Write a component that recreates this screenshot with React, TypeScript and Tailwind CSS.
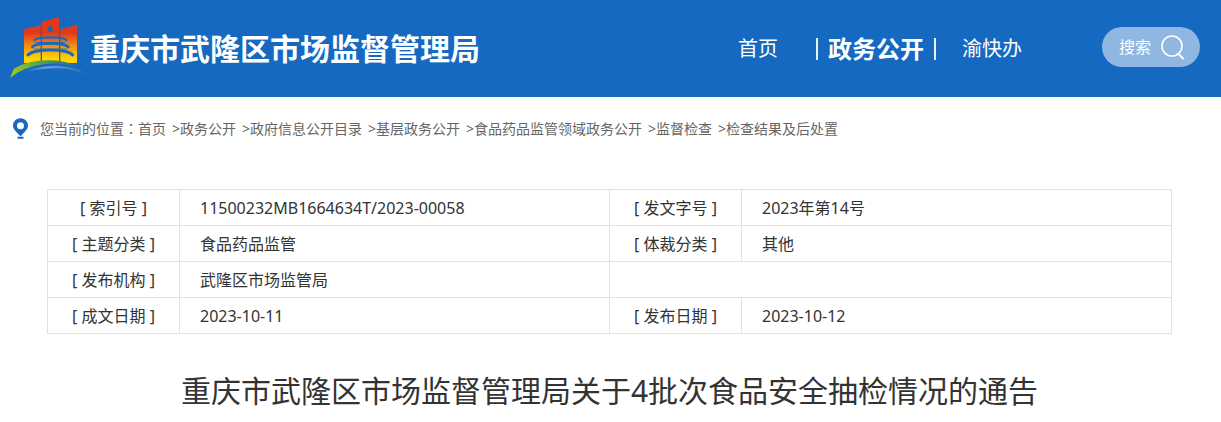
const crumbs = [
  "首页",
  "政务公开",
  "政府信息公开目录",
  "基层政务公开",
  "食品药品监管领域政务公开",
  "监督检查",
  "检查结果及后处置",
];

type Field = { label: string; value: string };

const rows: [Field, Field | null][] = [
  [
    { label: "索引号", value: "11500232MB1664634T/2023-00058" },
    { label: "发文字号", value: "2023年第14号" },
  ],
  [
    { label: "主题分类", value: "食品药品监管" },
    { label: "体裁分类", value: "其他" },
  ],
  [{ label: "发布机构", value: "武隆区市场监管局" }, null],
  [
    { label: "成文日期", value: "2023-10-11" },
    { label: "发布日期", value: "2023-10-12" },
  ],
];

function Logo() {
  return (
    <svg viewBox="30 33 240 186" className="h-[62px] w-20 shrink-0" aria-hidden="true">
      <defs>
        <linearGradient id="tower" x1="0" y1="36" x2="0" y2="174" gradientUnits="userSpaceOnUse">
          <stop offset="0.35" stopColor="#e2391d" />
          <stop offset="0.62" stopColor="#f28a14" />
          <stop offset="0.9" stopColor="#ffd400" />
        </linearGradient>
        <linearGradient id="hill" x1="30" y1="0" x2="225" y2="0" gradientUnits="userSpaceOnUse">
          <stop offset="0" stopColor="#a3cc14" />
          <stop offset="0.5" stopColor="#4fa04a" />
          <stop offset="1" stopColor="#2b6e9c" />
        </linearGradient>
        <linearGradient id="river" x1="75" y1="0" x2="272" y2="0" gradientUnits="userSpaceOnUse">
          <stop offset="0" stopColor="#2f78cc" />
          <stop offset="0.35" stopColor="#6f9fdc" />
          <stop offset="1" stopColor="#315fa5" />
        </linearGradient>
      </defs>
      <g fill="url(#tower)">
        <path d="M72 73 122 61V174H72Z" />
        <path d="M126 50 177 36V174H126Z" />
        <path d="M181 73 231 59V174H181Z" />
      </g>
      <ellipse cx="151" cy="73" rx="7" ry="9" fill="#1569c1" />
      <g fill="none" stroke="#1569c1" strokeLinecap="round">
        <path d="M103 105Q112 97 151 97T199 105" strokeWidth="7" />
        <path d="M108 113H194" strokeWidth="3" />
        <path d="M97 126Q108 115 151 115T205 126" strokeWidth="8" />
        <path d="M102 132H201" strokeWidth="2" />
        <path d="M84 150Q98 135 151 135T218 150" strokeWidth="9" />
      </g>
      <path d="M30 219 42 191Q85 165 150 166Q205 167 233 188Q190 172 135 177Q72 184 30 219Z" fill="url(#hill)" />
      <path d="M76 201Q115 182 170 182Q238 184 272 217Q230 190 170 190Q120 190 76 201Z" fill="url(#river)" />
    </svg>
  );
}

function PinIcon() {
  return (
    <svg viewBox="0 0 45 62" className="h-[21px] w-[15px] shrink-0" aria-hidden="true">
      <path
        fillRule="evenodd"
        d="M22.500 0A22.500 22.500 0 0 0 0 22.500C0 34 12 43 22.500 54C33 43 45 34 45 22.500A22.500 22.500 0 0 0 22.500 0ZM22.500 12A10.500 10.500 0 1 1 22.500 33A10.500 10.500 0 1 1 22.500 12Z"
        fill="#1569c1"
      />
      <rect x="13" y="56" width="19" height="6" rx="3" fill="#1569c1" />
    </svg>
  );
}

function SearchIcon() {
  return (
    <svg viewBox="0 0 24 26" className="h-[26px] w-6" fill="none" stroke="white" strokeLinecap="round" aria-hidden="true">
      <circle cx="11" cy="12" r="10" strokeWidth="1.600" />
      <path d="M17.500 20 22 24.500" strokeWidth="2" />
    </svg>
  );
}

function Cells({ label, value }: Field) {
  return (
    <>
      <th scope="row" className="border border-[#e2e2e2] text-center font-normal">
        [ {label} ]
      </th>
      <td className="border border-[#e2e2e2] px-5">{value}</td>
    </>
  );
}

export default function App() {
  return (
    <div className="bg-white font-['Noto_Sans','Noto_Sans_CJK_SC',sans-serif] text-[#333]">
      <header className="flex items-center bg-[#1569c1] pb-[3px] pl-[10px] pr-[21px] text-white">
        <a href="#" className="flex h-[94px] items-center">
          <Logo />
          <span className="whitespace-nowrap pt-[3px] text-[30px] font-bold">重庆市武隆区市场监督管理局</span>
        </a>
        <nav className="ml-auto flex items-center whitespace-nowrap pt-[3px] text-xl">
          <a href="#">首页</a>
          <a href="#" className="ml-[38px] flex items-center gap-[10px] text-2xl font-bold">
            <span className="h-[22px] w-[2px] bg-white/90" />
            政务公开
            <span className="h-[22px] w-[2px] bg-white/90" />
          </a>
          <a href="#" className="ml-[26px]">渝快办</a>
        </nav>
        <button
          type="button"
          className="ml-20 flex h-10 items-center gap-[10px] whitespace-nowrap rounded-full bg-[#90b7e2] pl-[17px] pr-[15px] text-base"
        >
          搜索
          <SearchIcon />
        </button>
      </header>

      <nav aria-label="您当前的位置" className="flex h-[62px] items-center gap-3 pl-[13px] text-sm text-[#666]">
        <PinIcon />
        <div className="whitespace-nowrap">
          您当前的位置
          {/* the TC face centres the full-width colon */}
          <span className="font-['Noto_Sans_CJK_TC',sans-serif]">：</span>
          {crumbs.map((name, i) => (
            <span key={name}>
              {i > 0 && <span className="inline-block w-[14px] text-right">&gt;</span>}
              <a href="#">{name}</a>
            </span>
          ))}
        </div>
      </nav>

      <main className="pb-2 pl-[47px] pr-[49px] pt-[30px]">
        <table className="w-full table-fixed border-collapse text-base">
          <colgroup>
            <col className="w-[132px]" />
            <col />
            <col className="w-[132px]" />
            <col />
          </colgroup>
          <tbody>
            {rows.map(([left, right]) => (
              <tr key={left.label} className="h-9">
                <Cells {...left} />
                {right ? <Cells {...right} /> : <td colSpan={2} className="border border-[#e2e2e2]" />}
              </tr>
            ))}
          </tbody>
        </table>
        <h1 className="mt-9 text-center text-[30px] leading-[42px]">
          重庆市武隆区市场监督管理局关于4批次食品安全抽检情况的通告
        </h1>
      </main>
    </div>
  );
}
